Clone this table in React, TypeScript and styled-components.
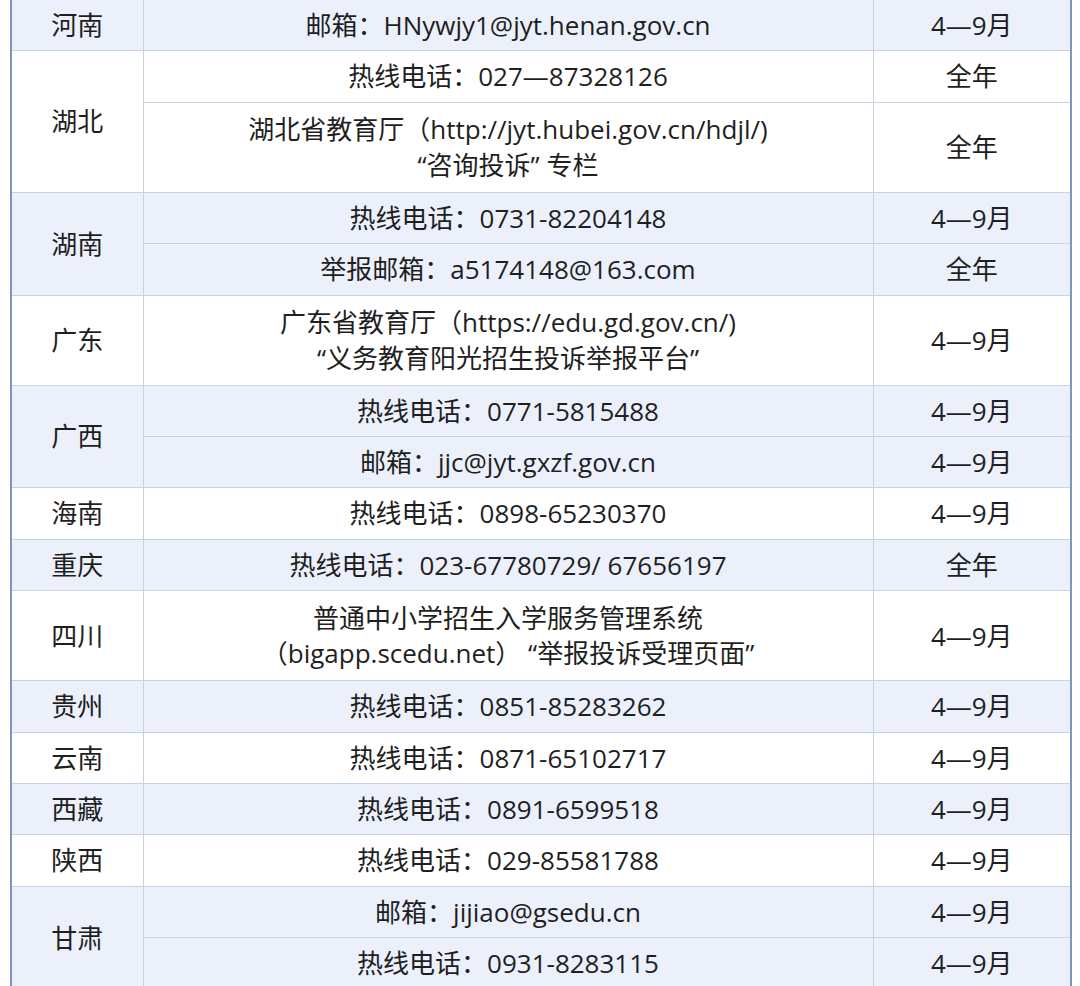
import React from 'react';
import styled, { createGlobalStyle } from 'styled-components';

const GlobalStyle = createGlobalStyle`
  html, body {
    margin: 0;
    padding: 0;
    background: #ffffff;
  }

  body {
    font-family: 'Open Sans', 'Noto Sans CJK SC', sans-serif;
    color: #1f1f1f;
  }
`;

const Page = styled.div`
  padding: 0 10px;
  overflow: hidden;
  height: 986px;
`;

const Table = styled.table`
  width: 1060px;
  margin-top: -1px;
  border-collapse: collapse;
  table-layout: fixed;
  border-left: 2px solid #8196b6;
  border-right: 2px solid #8196b6;
  font-size: 26px;
  line-height: 35.4px;
`;

const Row = styled.tr<{ $shaded: boolean }>`
  background: ${(p) => (p.$shaded ? '#ebf0fb' : '#ffffff')};
`;

const Cell = styled.td<{ $multi?: boolean }>`
  border: 1px solid #c6d3e7;
  padding: ${(p) => (p.$multi ? '9.6px 6px 8.6px' : '8px 6px 7px')};
  text-align: center;
  vertical-align: middle;
  white-space: nowrap;
`;

const Line = styled.div`
  display: block;
`;

type Entry = { text: string[]; period: string };
type Group = { province: string; entries: Entry[] };

const data: Group[] = [
  { province: '河南', entries: [{ text: ['邮箱：HNywjy1@jyt.henan.gov.cn'], period: '4—9月' }] },
  {
    province: '湖北',
    entries: [
      { text: ['热线电话：027—87328126'], period: '全年' },
      { text: ['湖北省教育厅（http://jyt.hubei.gov.cn/hdjl/)', '“咨询投诉” 专栏'], period: '全年' },
    ],
  },
  {
    province: '湖南',
    entries: [
      { text: ['热线电话：0731-82204148'], period: '4—9月' },
      { text: ['举报邮箱：a5174148@163.com'], period: '全年' },
    ],
  },
  {
    province: '广东',
    entries: [
      { text: ['广东省教育厅（https://edu.gd.gov.cn/)', '“义务教育阳光招生投诉举报平台”'], period: '4—9月' },
    ],
  },
  {
    province: '广西',
    entries: [
      { text: ['热线电话：0771-5815488'], period: '4—9月' },
      { text: ['邮箱：jjc@jyt.gxzf.gov.cn'], period: '4—9月' },
    ],
  },
  { province: '海南', entries: [{ text: ['热线电话：0898-65230370'], period: '4—9月' }] },
  { province: '重庆', entries: [{ text: ['热线电话：023-67780729/ 67656197'], period: '全年' }] },
  {
    province: '四川',
    entries: [
      { text: ['普通中小学招生入学服务管理系统', '（bigapp.scedu.net） “举报投诉受理页面”'], period: '4—9月' },
    ],
  },
  { province: '贵州', entries: [{ text: ['热线电话：0851-85283262'], period: '4—9月' }] },
  { province: '云南', entries: [{ text: ['热线电话：0871-65102717'], period: '4—9月' }] },
  { province: '西藏', entries: [{ text: ['热线电话：0891-6599518'], period: '4—9月' }] },
  { province: '陕西', entries: [{ text: ['热线电话：029-85581788'], period: '4—9月' }] },
  {
    province: '甘肃',
    entries: [
      { text: ['邮箱：jijiao@gsedu.cn'], period: '4—9月' },
      { text: ['热线电话：0931-8283115'], period: '4—9月' },
    ],
  },
];

const App = () => (
  <>
    <GlobalStyle />
    <Page>
      <Table>
        <colgroup>
          <col style={{ width: 132 }} />
          <col style={{ width: 730 }} />
          <col style={{ width: 198 }} />
        </colgroup>
        <tbody>
          {data.map((group, gi) =>
            group.entries.map((entry, ei) => (
              <Row key={`${gi}-${ei}`} $shaded={gi % 2 === 0}>
                {ei === 0 && <Cell rowSpan={group.entries.length}>{group.province}</Cell>}
                <Cell $multi={entry.text.length > 1}>
                  {entry.text.map((line) => (
                    <Line key={line}>{line}</Line>
                  ))}
                </Cell>
                <Cell>{entry.period}</Cell>
              </Row>
            )),
          )}
        </tbody>
      </Table>
    </Page>
  </>
);

export default App;
